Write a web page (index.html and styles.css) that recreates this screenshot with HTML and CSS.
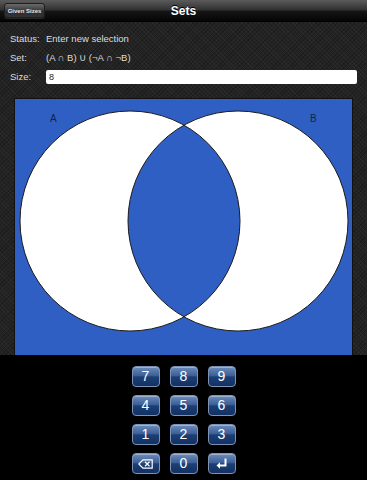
FILE: index.html
```
<!DOCTYPE html>
<html>
<head>
<meta charset="utf-8">
<link rel="stylesheet" href="styles.css">
</head>
<body>
<div class="app">
  <header class="topbar">
    <div class="left"><button class="navbtn">Given Sizes</button></div>
    <div class="title">Sets</div>
    <div class="right"></div>
  </header>
  <main class="content">
    <div class="info">
      <div class="row"><span class="label">Status:</span><span class="value">Enter new selection</span></div>
      <div class="row"><span class="label">Set:</span><span class="value">(A ∩ B) ∪ (¬A ∩ ¬B)</span></div>
      <div class="row"><span class="label">Size:</span><div class="input">8</div></div>
    </div>
    <div class="venn">
      <svg width="337" height="256" viewBox="0 0 337 256">
        <rect x="0" y="0" width="337" height="256" fill="#2f5fc2"/>
        <circle cx="115" cy="122" r="110" fill="#fff"/>
        <circle cx="223" cy="122" r="110" fill="#fff"/>
        <path d="M169,26.2 A110,110 0 0 1 169,217.8 A110,110 0 0 1 169,26.2 Z" fill="#2f5fc2"/>
        <circle cx="115" cy="122" r="110" fill="none" stroke="#1a1a1a" stroke-width="1"/>
        <circle cx="223" cy="122" r="110" fill="none" stroke="#1a1a1a" stroke-width="1"/>
        <text x="35" y="23" class="vlabel">A</text>
        <text x="295" y="23" class="vlabel">B</text>
      </svg>
    </div>
  </main>
  <section class="keypad">
    <button class="key">7</button>
    <button class="key">8</button>
    <button class="key">9</button>
    <button class="key">4</button>
    <button class="key">5</button>
    <button class="key">6</button>
    <button class="key">1</button>
    <button class="key">2</button>
    <button class="key">3</button>
    <button class="key"><svg width="15" height="10" viewBox="0 0 15 10"><path d="M5,0.8 H14.2 V9.2 H5 L0.8,5 Z" fill="none" stroke="#fff" stroke-width="1.2"/><path d="M7,2.8 L11.5,7.2 M11.5,2.8 L7,7.2" stroke="#fff" stroke-width="1.2"/></svg></button>
    <button class="key">0</button>
    <button class="key"><svg width="12" height="12" viewBox="0 0 12 12"><path d="M9.5,0.5 V7.5 H3" fill="none" stroke="#fff" stroke-width="2"/><path d="M0.5,7.5 L4,4.3 V10.7 Z" fill="#fff"/></svg></button>
  </section>
</div>
</body>
</html>
```
FILE: styles.css
```
html, body {
  margin: 0;
  padding: 0;
  background: #000;
}
.app {
  width: 367px;
  height: 480px;
  overflow: hidden;
  display: flex;
  flex-direction: column;
  font-family: "Liberation Sans", Arial, sans-serif;
}
.topbar {
  height: 22px;
  flex: none;
  display: grid;
  grid-template-columns: 1fr auto 1fr;
  align-items: center;
  background: linear-gradient(#5b5b5b 0%, #333 45%, #141414 55%, #050505 100%);
  border-bottom: 1px solid #000;
  box-sizing: border-box;
}
.left {
  padding-left: 4px;
  display: flex;
  align-items: center;
}
.navbtn {
  margin: 0;
  height: 15px;
  width: 41px;
  padding: 0;
  font-family: "Liberation Sans", Arial, sans-serif;
  font-size: 6px;
  font-weight: bold;
  color: #e8e8e8;
  border: 1px solid #1e1e1e;
  border-radius: 3px;
  background: linear-gradient(#6a6a6a, #3b3b3b 50%, #2a2a2a 51%, #333);
  box-shadow: 0 1px 0 rgba(255,255,255,0.12);
}
.title {
  color: #fff;
  font-weight: bold;
  font-size: 12px;
  text-shadow: 0 -1px 0 #000;
  padding-top: 1px;
}
.content {
  flex: none;
  height: 333px;
  background-color: #232323;
  background-image:
    repeating-linear-gradient(45deg, rgba(255,255,255,0.03) 0 1px, transparent 1px 3px),
    repeating-linear-gradient(-45deg, rgba(0,0,0,0.2) 0 1px, transparent 1px 3px);
  display: flex;
  flex-direction: column;
}
.info {
  padding: 9px 10px 0 10px;
  display: flex;
  flex-direction: column;
  gap: 4px;
}
.row {
  display: flex;
  align-items: center;
  height: 15px;
  font-size: 9.5px;
  color: #dcdcdc;
}
.label {
  width: 36px;
  flex: none;
}
.input {
  flex: 1;
  height: 14px;
  background: #fff;
  border-radius: 2px;
  color: #222;
  font-size: 9px;
  line-height: 14px;
  padding-left: 3px;
  box-sizing: border-box;
}
.venn {
  margin: 15px 0 0 15px;
  width: 337px;
  height: 256px;
  box-shadow: 0 0 0 1px #111;
}
.venn svg {
  display: block;
}
.vlabel {
  font-family: "Liberation Sans", Arial, sans-serif;
  font-size: 10px;
  fill: #13244a;
}
.keypad {
  flex: 1;
  background: #000;
  display: grid;
  grid-template-columns: repeat(3, 28px);
  grid-auto-rows: 21px;
  column-gap: 10px;
  row-gap: 8px;
  justify-content: center;
  align-content: start;
  padding-top: 11px;
}
.key {
  margin: 0;
  padding: 0;
  border: 1px solid #7d93b6;
  border-radius: 4px;
  background: linear-gradient(#6c8cbc 0%, #3c5f96 45%, #1d3f76 52%, #123163 100%);
  color: #fff;
  font-family: "Liberation Sans", Arial, sans-serif;
  font-size: 14px;
  line-height: 19px;
  display: flex;
  align-items: center;
  justify-content: center;
  box-shadow: inset 0 1px 0 rgba(255,255,255,0.35);
}
```
